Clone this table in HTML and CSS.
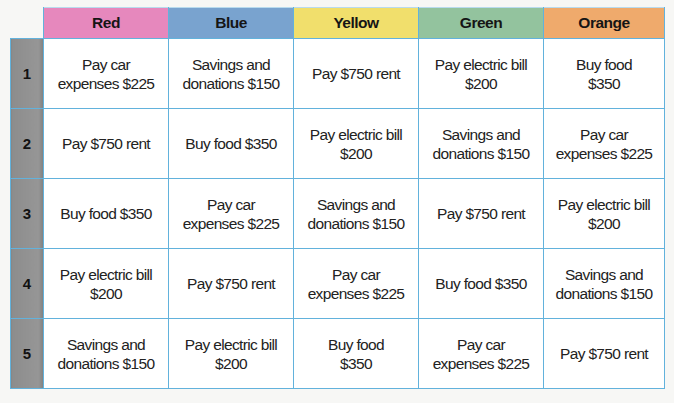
FILE: index.html
```html
<!DOCTYPE html>
<html>
<head>
<meta charset="utf-8">
<link rel="stylesheet" href="styles.css">
</head>
<body>
<table class="budget">
  <colgroup>
    <col class="c-num">
    <col class="c-main">
    <col class="c-main">
    <col class="c-main">
    <col class="c-main">
    <col class="c-last">
  </colgroup>
  <thead>
    <tr>
      <th class="corner"></th>
      <th class="h red">Red</th>
      <th class="h blue">Blue</th>
      <th class="h yellow">Yellow</th>
      <th class="h green">Green</th>
      <th class="h orange">Orange</th>
    </tr>
  </thead>
  <tbody>
    <tr>
      <th class="num">1</th>
      <td>Pay car<br>expenses $225</td>
      <td>Savings and<br>donations $150</td>
      <td>Pay $750 rent</td>
      <td>Pay electric bill<br>$200</td>
      <td>Buy food<br>$350</td>
    </tr>
    <tr>
      <th class="num">2</th>
      <td>Pay $750 rent</td>
      <td>Buy food $350</td>
      <td>Pay electric bill<br>$200</td>
      <td>Savings and<br>donations $150</td>
      <td>Pay car<br>expenses $225</td>
    </tr>
    <tr>
      <th class="num">3</th>
      <td>Buy food $350</td>
      <td>Pay car<br>expenses $225</td>
      <td>Savings and<br>donations $150</td>
      <td>Pay $750 rent</td>
      <td>Pay electric bill<br>$200</td>
    </tr>
    <tr>
      <th class="num">4</th>
      <td>Pay electric bill<br>$200</td>
      <td>Pay $750 rent</td>
      <td>Pay car<br>expenses $225</td>
      <td>Buy food $350</td>
      <td>Savings and<br>donations $150</td>
    </tr>
    <tr>
      <th class="num">5</th>
      <td>Savings and<br>donations $150</td>
      <td>Pay electric bill<br>$200</td>
      <td>Buy food<br>$350</td>
      <td>Pay car<br>expenses $225</td>
      <td>Pay $750 rent</td>
    </tr>
  </tbody>
</table>
</body>
</html>
```
FILE: styles.css
```css
html, body {
  margin: 0;
  padding: 0;
  background: #f7f7f5;
}
body {
  padding: 7px 0 0 10px;
  font-family: "Liberation Sans", Arial, sans-serif;
  color: #1c1c1c;
}
.budget {
  border-collapse: collapse;
  table-layout: fixed;
  width: 654px;
}
.c-num { width: 33px; }
.c-main { width: 125px; }
.c-last { width: 121px; }
.budget th, .budget td {
  border: 1.5px solid #62b2dc;
  padding: 0;
  text-align: center;
  vertical-align: middle;
}
.corner {
  border-top: none !important;
  border-left: none !important;
  background: transparent;
}
.h {
  height: 30px;
  font-size: 15.5px;
  letter-spacing: -0.5px;
  font-weight: bold;
  color: #151515;
  border-top-color: #b9dbee !important;
}
.red { background: #e688bd; }
.blue { background: #79a3cf; }
.yellow { background: #f1df6c; }
.green { background: #93c39e; }
.orange { background: #efaa6c; }
.num {
  background: linear-gradient(to right, #8c8c8c 0%, #969696 85%, #7f7f7f 100%);
  font-size: 15px;
  font-weight: bold;
  color: #121212;
  height: 69px;
}
.budget td {
  background: #ffffff;
  font-size: 15.5px;
  letter-spacing: -0.65px;
  line-height: 19px;
  color: #222;
  height: 69px;
}
```
